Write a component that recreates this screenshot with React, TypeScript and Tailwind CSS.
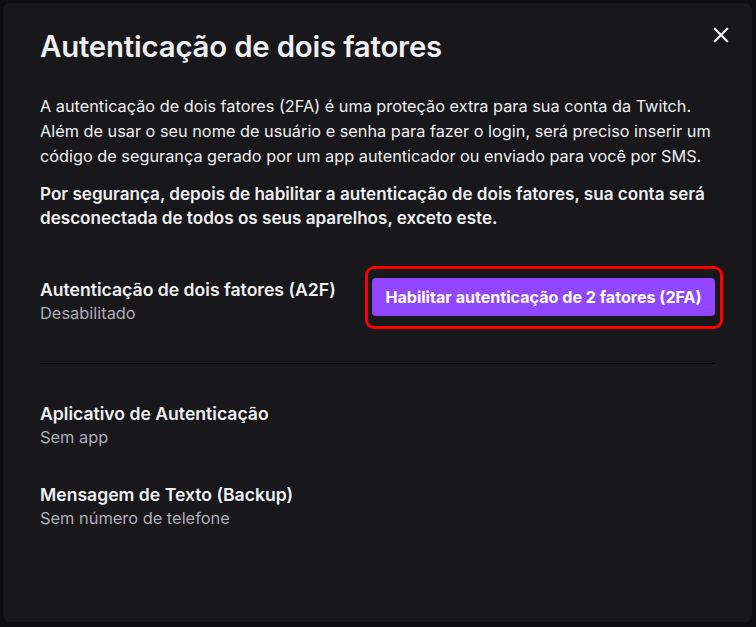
import React from "react";

function CloseIcon() {
  return (
    <svg width="16" height="16" viewBox="0 0 16 16" fill="none">
      <path d="M1.8 1.8 L14.2 14.2 M14.2 1.8 L1.8 14.2" stroke="#efeff1" strokeWidth="2.3" strokeLinecap="round" />
    </svg>
  );
}

function SettingRow({ title, sub }: { title: string; sub: string }) {
  return (
    <div className="flex flex-col">
      <div className="text-[17.6px] leading-[24px] font-semibold text-[#efeff1]">{title}</div>
      <div className="text-[16.4px] leading-[22px] text-[#adadb8]">{sub}</div>
    </div>
  );
}

export default function App() {
  return (
    <div
      className="w-[756px] h-[627px] bg-[#0e0e10] pt-[3px] pl-[3px]"
      style={{ fontFamily: "Inter, 'Noto Sans', sans-serif" }}
    >
      <div className="relative w-[749px] h-[619px] bg-[#18181b] rounded-[7px] px-[37px] pt-[24px]">
        <button className="absolute right-[23px] top-[24px]">
          <CloseIcon />
        </button>
        <h1 className="text-[29.4px] leading-[40px] font-semibold text-[#efeff1] tracking-[-0.2px]">
          Autenticação de dois fatores
        </h1>
        <div className="mt-[27px] text-[16.3px] leading-[25px] text-[#efeff1] whitespace-nowrap">
          <p>
            A autenticação de dois fatores (2FA) é uma proteção extra para sua conta da Twitch.
            <br />
            Além de usar o seu nome de usuário e senha para fazer o login, será preciso inserir um
            <br />
            código de segurança gerado por um app autenticador ou enviado para você por SMS.
          </p>
          <p className="mt-[13px] text-[17.1px] font-semibold leading-[24px]">
            Por segurança, depois de habilitar a autenticação de dois fatores, sua conta será
            <br />
            desconectada de todos os seus aparelhos, exceto este.
          </p>
        </div>
        <div className="mt-[48px] flex items-start justify-between">
          <SettingRow title="Autenticação de dois fatores (A2F)" sub="Desabilitado" />
          <div className="-mt-[12px] -mr-[8px] rounded-[9px] border-[3px] border-[#ff0000] pt-[9px] pb-[10px] pl-[4px] pr-[5px]">
            <button className="h-[38px] w-[343px] rounded-[4px] bg-[#9147ff] text-white text-[16.1px] font-bold">
              Habilitar autenticação de 2 fatores (2FA)
            </button>
          </div>
        </div>
        <div className="mt-[34px] h-px bg-black" />
        <div className="mt-[38px] flex flex-col gap-[35px]">
          <SettingRow title="Aplicativo de Autenticação" sub="Sem app" />
          <SettingRow title="Mensagem de Texto (Backup)" sub="Sem número de telefone" />
        </div>
      </div>
    </div>
  );
}
